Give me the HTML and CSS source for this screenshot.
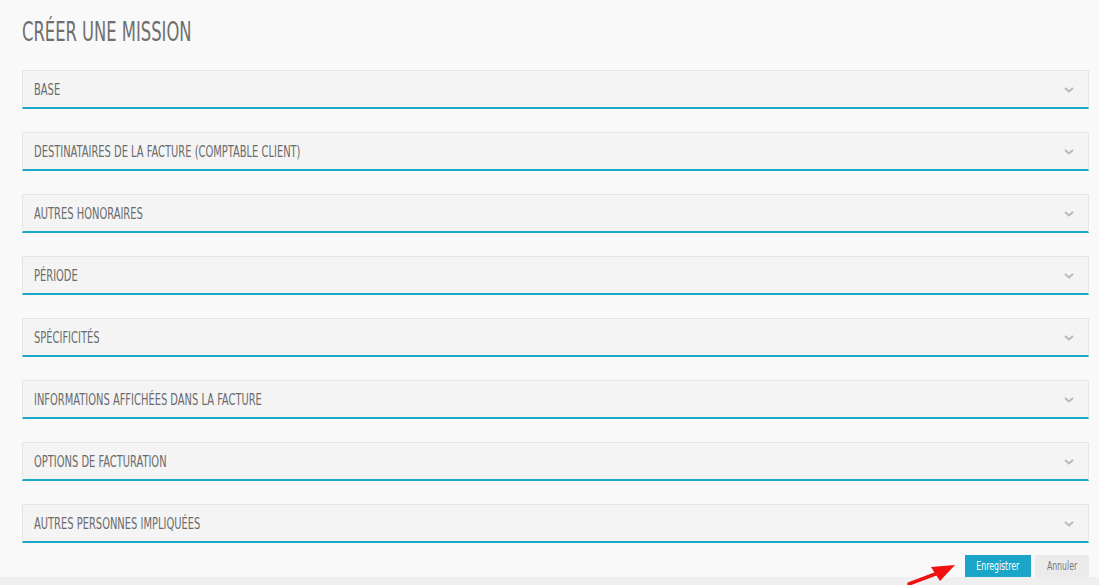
FILE: index.html
```html
<!DOCTYPE html>
<html lang="fr">
<head>
<meta charset="utf-8">
<title>Créer une mission</title>
<link rel="stylesheet" href="styles.css">
</head>
<body>
<div class="page">
  <h1 class="title"><span class="narrow">Créer une mission</span></h1>
  <div class="panels">
    <div class="panel"><span class="panel-title narrow">Base</span><svg class="chev" width="10" height="6" viewBox="0 0 10 6"><path d="M1 1l4 3.5L9 1" fill="none" stroke="#b8b8b8" stroke-width="2"/></svg></div>
    <div class="panel"><span class="panel-title narrow">Destinataires de la facture (comptable client)</span><svg class="chev" width="10" height="6" viewBox="0 0 10 6"><path d="M1 1l4 3.5L9 1" fill="none" stroke="#b8b8b8" stroke-width="2"/></svg></div>
    <div class="panel"><span class="panel-title narrow">Autres honoraires</span><svg class="chev" width="10" height="6" viewBox="0 0 10 6"><path d="M1 1l4 3.5L9 1" fill="none" stroke="#b8b8b8" stroke-width="2"/></svg></div>
    <div class="panel"><span class="panel-title narrow">Période</span><svg class="chev" width="10" height="6" viewBox="0 0 10 6"><path d="M1 1l4 3.5L9 1" fill="none" stroke="#b8b8b8" stroke-width="2"/></svg></div>
    <div class="panel"><span class="panel-title narrow">Spécificités</span><svg class="chev" width="10" height="6" viewBox="0 0 10 6"><path d="M1 1l4 3.5L9 1" fill="none" stroke="#b8b8b8" stroke-width="2"/></svg></div>
    <div class="panel"><span class="panel-title narrow">Informations affichées dans la facture</span><svg class="chev" width="10" height="6" viewBox="0 0 10 6"><path d="M1 1l4 3.5L9 1" fill="none" stroke="#b8b8b8" stroke-width="2"/></svg></div>
    <div class="panel"><span class="panel-title narrow">Options de facturation</span><svg class="chev" width="10" height="6" viewBox="0 0 10 6"><path d="M1 1l4 3.5L9 1" fill="none" stroke="#b8b8b8" stroke-width="2"/></svg></div>
    <div class="panel"><span class="panel-title narrow">Autres personnes impliquées</span><svg class="chev" width="10" height="6" viewBox="0 0 10 6"><path d="M1 1l4 3.5L9 1" fill="none" stroke="#b8b8b8" stroke-width="2"/></svg></div>
  </div>
  <div class="actions">
    <svg class="arrow" width="52" height="26" viewBox="0 0 52 26"><path d="M3 23L32 12" stroke="#f01010" stroke-width="3.5" stroke-linecap="round"/><path d="M49 4L25 6L34 20Z" fill="#f01010"/></svg>
    <button class="btn btn-primary"><span class="narrow-btn">Enregistrer</span></button>
    <button class="btn btn-default"><span class="narrow-btn">Annuler</span></button>
  </div>
</div>
</body>
</html>
```
FILE: styles.css
```css
* { box-sizing: border-box; }
html, body { margin: 0; padding: 0; }
body {
  background: #efefef;
  font-family: "DejaVu Sans Condensed", "DejaVu Sans", sans-serif;
  color: #6b6b6b;
  height: 585px;
  overflow: hidden;
}
.page {
  background: #f9f9f9;
  padding: 18px 10px 0 22px;
  height: 577px;
}
.narrow {
  display: inline-block;
  transform-origin: left center;
  white-space: nowrap;
}
.title {
  margin: 0;
  font-size: 26px;
  font-weight: 400;
  text-transform: uppercase;
  color: #6f6f6f;
  line-height: 28px;
}
.title .narrow { transform: scaleX(0.70); }
.panels {
  margin-top: 24px;
  display: flex;
  flex-direction: column;
  gap: 23px;
}
.panel {
  height: 39px;
  background: #f4f4f4;
  border: 1px solid #e6e6e6;
  border-bottom: 2px solid #1ba8cb;
  display: flex;
  align-items: center;
  justify-content: space-between;
  padding: 1px 14px 0 11px;
}
.panel-title {
  font-size: 15px;
  text-transform: uppercase;
  color: #6b6b6b;
  transform: scaleX(0.735);
}
.chev { display: block; }
.actions {
  margin-top: 12px;
  display: flex;
  justify-content: flex-end;
  gap: 4px;
  position: relative;
}
.btn {
  border: 0;
  height: 22px;
  font-family: inherit;
  font-size: 12px;
  padding: 0;
  cursor: pointer;
  display: flex;
  align-items: center;
  justify-content: center;
}
.narrow-btn {
  display: inline-block;
  transform: scaleX(0.72);
  white-space: nowrap;
}
.btn-primary {
  background: #1ba6c9;
  color: #fff;
  width: 66px;
}
.btn-default {
  background: #ebebeb;
  color: #777;
  width: 54px;
}
.arrow {
  position: absolute;
  right: 131px;
  top: 6px;
}
```
